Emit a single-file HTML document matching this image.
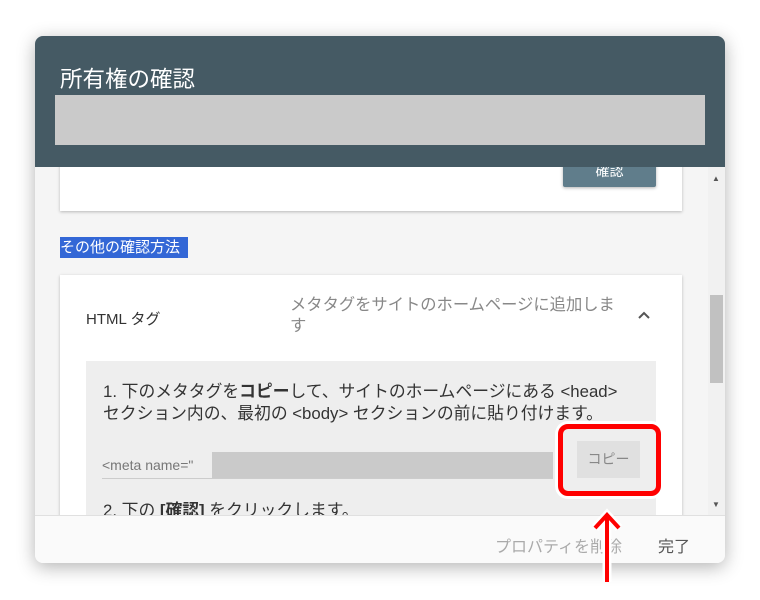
<!DOCTYPE html>
<html><head><meta charset="utf-8"><style>
*{margin:0;padding:0;box-sizing:border-box}
body{width:760px;height:600px;background:#fff;position:relative;overflow:hidden;font-family:"Liberation Sans","Noto Sans CJK JP",sans-serif;color:#333}
.dlg{position:absolute;left:35px;top:36px;width:690px;height:527px;background:#f5f5f5;border-radius:8px;box-shadow:0 4px 18px rgba(0,0,0,.3);overflow:hidden;z-index:1}
.hdr{position:absolute;left:0;top:0;width:690px;height:131px;background:#455a64;z-index:2}
.hdr h1{position:absolute;left:25px;top:26px;font-size:22.5px;font-weight:normal;color:#fff}
.gbar{position:absolute;left:20px;top:59px;width:650px;height:50px;background:#cacaca}
.abs{position:absolute;white-space:nowrap}
.card{position:absolute;background:#fff;box-shadow:0 1px 3px rgba(0,0,0,.25)}
.foot{position:absolute;left:0;top:479px;width:690px;height:48px;background:#fafafa;border-top:1px solid #e0e0e0;z-index:2}
</style></head><body>
<div class="dlg">
 <div class="hdr"><h1>所有権の確認</h1><div class="gbar"></div></div>
 <div class="card" style="left:25px;top:100px;width:622px;height:75px"></div>
 <div class="abs" style="left:528px;top:122px;width:93px;height:29px;background:#607d8b;border-radius:2px;box-shadow:0 1px 3px rgba(0,0,0,.3);color:#fff;font-size:14px;text-align:center;line-height:26px">確認</div>
 <div class="abs" style="left:25px;top:201px;width:128px;height:21px;background:#3367d6;color:#fff;font-size:15px;line-height:21px">その他の確認方法</div>
 <div class="card" style="left:25px;top:239px;width:622px;height:300px"></div>
 <div class="abs" style="left:51px;top:272px;font-size:15px;color:#333">HTML タグ</div>
 <div class="abs" style="left:255px;top:259px;font-size:16.3px;color:#888;line-height:21px">メタタグをサイトのホームページに追加しま<br>す</div>
 <svg class="abs" style="left:602px;top:274px" width="14" height="10"><path d="M2 8 L7 3 L12 8" stroke="#555" stroke-width="2" fill="none"/></svg>
 <div class="abs" style="left:51px;top:325px;width:570px;height:200px;background:#eeeeee"></div>
 <div class="abs" style="left:68px;top:345px;font-size:16.8px;line-height:22px;color:#333">1. 下のメタタグを<b>コピー</b>して、サイトのホームページにある &lt;head&gt;<br>セクション内の、最初の &lt;body&gt; セクションの前に貼り付けます。</div>
 <div class="abs" style="left:67px;top:421px;font-size:14px;color:#777">&lt;meta name="</div>
 <div class="abs" style="left:177px;top:416px;width:341px;height:26px;background:#cacaca"></div>
 <div class="abs" style="left:67px;top:442px;width:451px;height:1px;background:#ccc"></div>
 <div class="abs" style="left:542px;top:405px;width:63px;height:37px;background:#e0e0e0;color:#888;font-size:14px;text-align:center;line-height:37px">コピー</div>
 <div class="abs" style="left:68px;top:461px;font-size:16.8px;color:#333">2. 下の <b>[確認]</b> をクリックします。</div>
 <div class="abs" style="left:673px;top:131px;width:17px;height:348px;background:#f1f1f1"></div>
 <div class="abs" style="left:675px;top:259px;width:13px;height:88px;background:#c1c1c1"></div>
 <div class="abs" style="left:677px;top:138px;font-size:8px;color:#555">▲</div>
 <div class="abs" style="left:677px;top:464px;font-size:8px;color:#555">▼</div>
 <div class="foot">
  <div class="abs" style="left:460px;top:17px;font-size:16px;color:#aaa">プロパティを削除</div>
  <div class="abs" style="left:623px;top:17px;font-size:16px;color:#555">完了</div>
 </div>
</div>
<div class="abs" style="left:558px;top:424px;width:103px;height:72px;border:5px solid #f00;border-radius:10px;box-shadow:0 0 0 3px #fff;z-index:5"></div>
<svg class="abs" style="left:590px;top:508px;z-index:5" width="36" height="76"><path d="M17 6 V74 M5 20 L17 7 L29 20" stroke="#fff" stroke-width="9" fill="none"/><path d="M17 6 V74 M5 20 L17 7 L29 20" stroke="#f00" stroke-width="4" fill="none"/></svg>
</body></html>
